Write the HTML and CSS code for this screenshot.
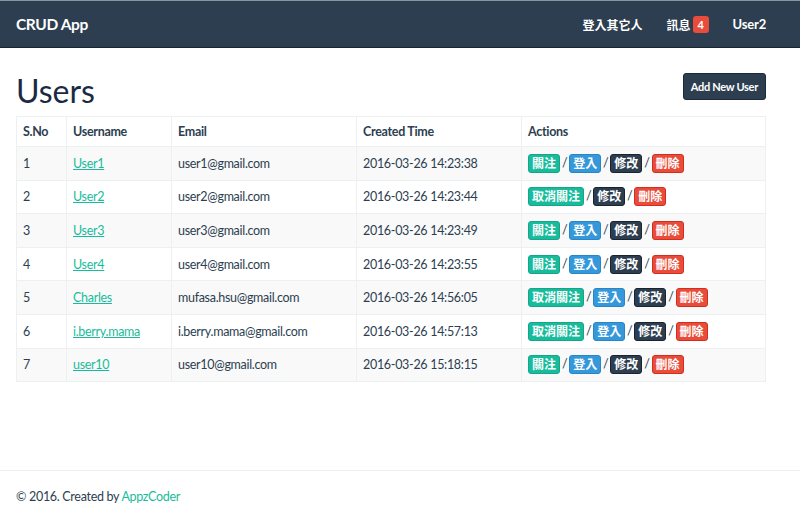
FILE: index.html
```html
<!DOCTYPE html>
<html>
<head>
<meta charset="utf-8">
<link rel="stylesheet" href="styles.css">
</head>
<body>
<nav class="navbar">
  <a class="brand" href="#">CRUD App</a>
  <ul class="nav">
    <li><a href="#">登入其它人</a></li>
    <li><a href="#">訊息 <span class="badge">4</span></a></li>
    <li><a class="user" href="#">User2</a></li>
  </ul>
</nav>
<main class="container">
  <div class="head">
    <h1>Users</h1>
    <a class="btn" href="#">Add New User</a>
  </div>
  <table class="table">
    <thead>
      <tr><th class="c1">S.No</th><th class="c2">Username</th><th class="c3">Email</th><th class="c4">Created Time</th><th>Actions</th></tr>
    </thead>
    <tbody>
      <tr><td>1</td><td><a href="#">User1</a></td><td>user1@gmail.com</td><td>2016-03-26 14:23:38</td><td class="acts"><span class="lbl g">關注</span> / <span class="lbl b">登入</span> / <span class="lbl d">修改</span> / <span class="lbl r">刪除</span></td></tr>
      <tr><td>2</td><td><a href="#">User2</a></td><td>user2@gmail.com</td><td>2016-03-26 14:23:44</td><td class="acts"><span class="lbl g">取消關注</span> / <span class="lbl d">修改</span> / <span class="lbl r">刪除</span></td></tr>
      <tr><td>3</td><td><a href="#">User3</a></td><td>user3@gmail.com</td><td>2016-03-26 14:23:49</td><td class="acts"><span class="lbl g">關注</span> / <span class="lbl b">登入</span> / <span class="lbl d">修改</span> / <span class="lbl r">刪除</span></td></tr>
      <tr><td>4</td><td><a href="#">User4</a></td><td>user4@gmail.com</td><td>2016-03-26 14:23:55</td><td class="acts"><span class="lbl g">關注</span> / <span class="lbl b">登入</span> / <span class="lbl d">修改</span> / <span class="lbl r">刪除</span></td></tr>
      <tr><td>5</td><td><a href="#">Charles</a></td><td>mufasa.hsu@gmail.com</td><td>2016-03-26 14:56:05</td><td class="acts"><span class="lbl g">取消關注</span> / <span class="lbl b">登入</span> / <span class="lbl d">修改</span> / <span class="lbl r">刪除</span></td></tr>
      <tr><td>6</td><td><a href="#">i.berry.mama</a></td><td>i.berry.mama@gmail.com</td><td>2016-03-26 14:57:13</td><td class="acts"><span class="lbl g">取消關注</span> / <span class="lbl b">登入</span> / <span class="lbl d">修改</span> / <span class="lbl r">刪除</span></td></tr>
      <tr><td>7</td><td><a href="#">user10</a></td><td>user10@gmail.com</td><td>2016-03-26 15:18:15</td><td class="acts"><span class="lbl g">關注</span> / <span class="lbl b">登入</span> / <span class="lbl d">修改</span> / <span class="lbl r">刪除</span></td></tr>
    </tbody>
  </table>
</main>
<footer class="footer">
  <p>© 2016. Created by <a href="#">AppzCoder</a></p>
</footer>
</body>
</html>
```
FILE: styles.css
```css
* { box-sizing: border-box; }
html, body { margin: 0; padding: 0; }
body {
  font-family: Lato, "Noto Sans CJK TC", sans-serif;
  font-size: 12.5px;
  letter-spacing: -0.3px;
  color: #2c3e50;
  background: #fff;
  width: 800px;
  height: 521px;
  display: flex;
  flex-direction: column;
}
a { color: #18bc9c; }
.navbar {
  height: 48px;
  background: #2c3e50;
  border-top: 1px solid #8a949e;
  border-bottom: 1px solid #1a242f;
  display: flex;
  align-items: center;
  justify-content: space-between;
  padding: 0 34px 0 16px;
}
.brand {
  color: #fff;
  font-weight: 700;
  font-size: 15.5px;
  text-decoration: none;
  letter-spacing: -0.4px;
}
.nav {
  list-style: none;
  margin: 0;
  padding: 0;
  display: flex;
}
.nav li a {
  color: #fff;
  font-weight: 700;
  font-size: 12px;
  letter-spacing: 0;
  text-decoration: none;
  display: flex;
  align-items: center;
  gap: 2px;
}
.nav li a.user { font-size: 13px; letter-spacing: -0.2px; }
.nav li:nth-child(1) { margin-right: 24px; }
.nav li:nth-child(2) { margin-right: 24px; }
.badge {
  background: #e74c3c;
  color: #fff;
  font-size: 11px;
  font-weight: 700;
  border-radius: 3px;
  padding: 0 4px;
  height: 17px;
  line-height: 17px;
  display: inline-block;
  min-width: 16px;
  text-align: center;
}
.container {
  padding: 0 34px 0 16px;
  flex: 1;
}
.head {
  display: flex;
  justify-content: space-between;
  align-items: flex-start;
  margin-top: 26px;
  height: 42px;
}
h1 {
  margin: 0;
  font-size: 32px;
  font-weight: 400;
  line-height: 34px;
  letter-spacing: 0;
  color: #1a2a44;
}
.btn {
  margin-top: -1px;
  background: #2c3e50;
  color: #fff;
  font-size: 11px;
  font-weight: 700;
  text-decoration: none;
  border-radius: 3px;
  border: 1px solid #1c2b3a;
  padding: 0 7px;
  height: 27px;
  line-height: 25px;
  letter-spacing: -0.3px;
}
.table {
  width: 750px;
  border-collapse: collapse;
  border: 1px solid #ecf0f1;
}
.table th, .table td {
  border: 1px solid #ecf0f1;
  text-align: left;
  padding: 0 6px;
  vertical-align: middle;
}
.table th {
  height: 30px;
  font-weight: 700;
  color: #2c3e50;
}
.table td {
  height: 33.6px;
  color: #2c3e50;
}
.table td.acts { word-spacing: -1px; }
.c1 { width: 50px; }
.c2 { width: 105px; }
.c3 { width: 185px; }
.c4 { width: 165px; }
.table tbody tr:nth-child(odd) td { background: #f9f9f9; }
.table td a { color: #18bc9c; text-decoration: underline; }
.lbl {
  display: inline-block;
  color: #fff;
  font-size: 12px;
  font-weight: 700;
  letter-spacing: 0;
  word-spacing: 0;
  border-radius: 3px;
  padding: 0 3px;
  line-height: 17px;
  height: 19px;
  vertical-align: middle;
}
.g { background: #18bc9c; border: 1px solid #15a589; }
.b { background: #3498db; border: 1px solid #2a85c4; }
.d { background: #2c3e50; border: 1px solid #1a242f; }
.r { background: #e74c3c; border: 1px solid #d62c1a; }
.footer {
  border-top: 1px solid #eeeeee;
  height: 51px;
  padding: 0 16px;
  display: flex;
  align-items: center;
}
.footer p {
  margin: 0;
  color: #2c3e50;
  padding-top: 1px;
}
.footer a { text-decoration: none; }
```
